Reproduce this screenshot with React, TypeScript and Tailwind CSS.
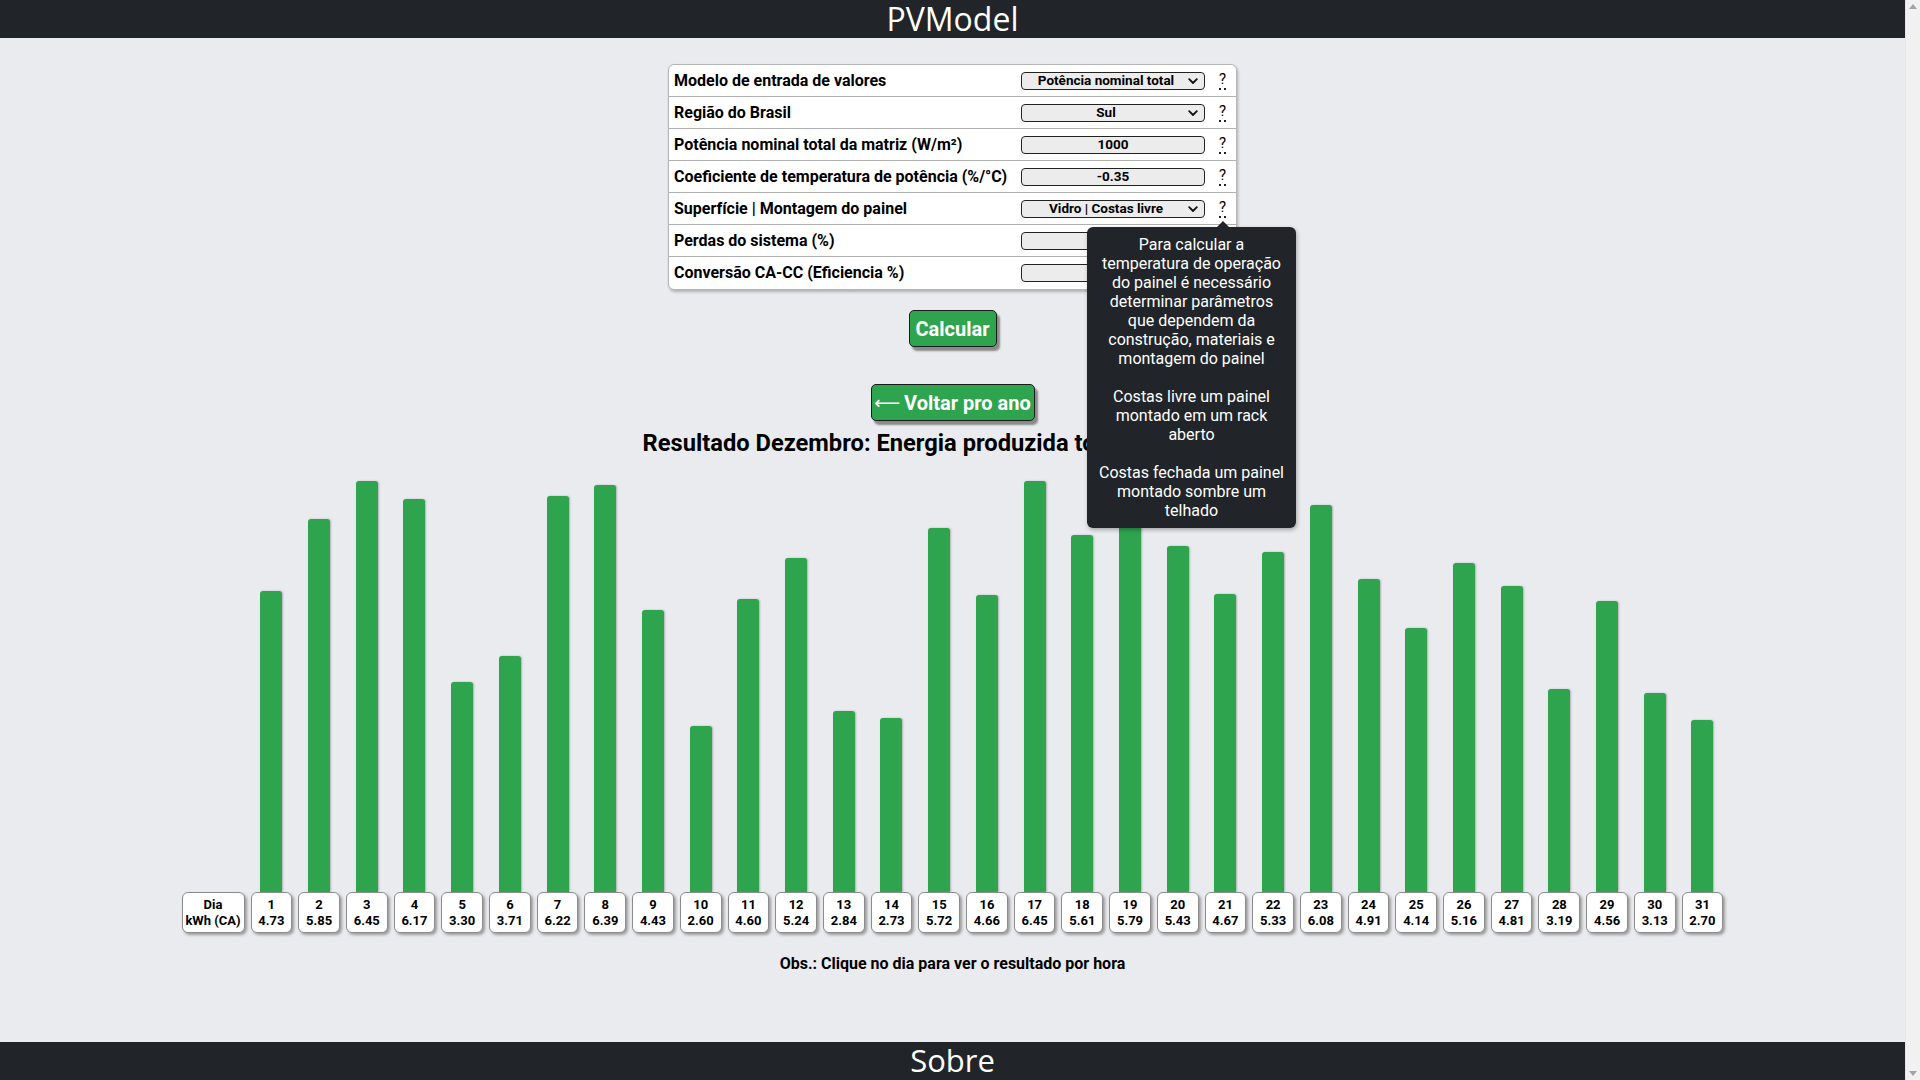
import React from "react";

const rows: { label: string; kind: "select" | "input"; value?: string }[] = [
  { label: "Modelo de entrada de valores", kind: "select", value: "Potência nominal total" },
  { label: "Região do Brasil", kind: "select", value: "Sul" },
  { label: "Potência nominal total da matriz (W/m²)", kind: "input", value: "1000" },
  { label: "Coeficiente de temperatura de potência (%/°C)", kind: "input", value: "-0.35" },
  { label: "Superfície | Montagem do painel", kind: "select", value: "Vidro | Costas livre" },
  { label: "Perdas do sistema (%)", kind: "input", value: "14" },
  { label: "Conversão CA-CC (Eficiencia %)", kind: "input", value: "96" },
];

const values = [
  4.73, 5.85, 6.45, 6.17, 3.3, 3.71, 6.22, 6.39, 4.43, 2.6, 4.6, 5.24, 2.84, 2.73, 5.72, 4.66, 6.45, 5.61,
  5.79, 5.43, 4.67, 5.33, 6.08, 4.91, 4.14, 5.16, 4.81, 3.19, 4.56, 3.13, 2.7,
];

const MAX = 6.45;
const BAR_AREA = 411;

function Chevron() {
  return (
    <svg width="10" height="7" viewBox="0 0 10 7" className="absolute right-[6px] top-[5.5px]">
      <path d="M1.2 1.2 L5 5 L8.8 1.2" fill="none" stroke="#111" strokeWidth="1.8" strokeLinecap="round" strokeLinejoin="round" />
    </svg>
  );
}

function Field({ kind, value }: { kind: string; value?: string }) {
  return (
    <div className="relative w-[184px] h-[18px] rounded-[4px] border border-[#222] bg-[#ececec] flex items-center justify-center text-[13.5px] font-bold text-black leading-none">
      <span className={kind === "select" ? "pr-[14px]" : ""}>{value}</span>
      {kind === "select" && <Chevron />}
    </div>
  );
}

function Scrollbar() {
  return (
    <div className="w-[15px] shrink-0 h-screen bg-[#f1f1f1] border-l border-[#e6e6e6] flex flex-col items-center justify-between py-[4px]">
      <svg width="8" height="5" viewBox="0 0 8 5">
        <path d="M0 5 L4 0 L8 5 Z" fill="#a3a3a3" />
      </svg>
      <svg width="8" height="5" viewBox="0 0 8 5">
        <path d="M0 0 L8 0 L4 5 Z" fill="#a3a3a3" />
      </svg>
    </div>
  );
}

export default function App() {
  return (
    <div className="h-screen overflow-hidden flex bg-[#eaebee] text-black" style={{ fontFamily: "Roboto, 'Liberation Sans', sans-serif" }}>
      <div className="flex-1 min-w-0">
        <header className="h-[38px] bg-[#212529] flex items-center justify-center">
          <span className="text-white text-[32px] leading-[38px]" style={{ fontFamily: "'Open Sans', 'Noto Sans', sans-serif" }}>
            PVModel
          </span>
        </header>

        <main className="flex flex-col items-center pt-[26px]">
          <div className="relative w-[569px] bg-white border border-[#b5b5b5] rounded-[6px] shadow-[1px_2px_3px_rgba(0,0,0,0.25)]">
            {rows.map((r, i) => (
              <div
                key={i}
                className={`h-[32px] flex items-center pl-[5px] ${i < rows.length - 1 ? "border-b border-[#b0b0b0]" : ""}`}
              >
                <div className="flex-1 text-[16px] font-bold leading-none">{r.label}</div>
                <Field kind={r.kind} value={r.value} />
                <div className="w-[31px] flex justify-center pl-[4px]">
                  <span className="text-[15px] leading-[15px] border-b-2 border-dotted border-[#222] pb-[1px]">?</span>
                </div>
              </div>
            ))}

            {/* tooltip */}
            <div className="absolute left-[418px] top-[162px] w-[209px] z-10">
              <div className="absolute left-[130px] -top-[6px] w-0 h-0 border-l-[6px] border-r-[6px] border-b-[6px] border-l-transparent border-r-transparent border-b-[#212529]" />
              <div className="bg-[#212529] text-white rounded-[6px] py-[8px] text-center text-[16px] leading-[19px] shadow-[1px_2px_4px_rgba(0,0,0,0.3)] whitespace-nowrap">
                <div>Para calcular a</div>
                <div>temperatura de operação</div>
                <div>do painel é necessário</div>
                <div>determinar parâmetros</div>
                <div>que dependem da</div>
                <div>construção, materiais e</div>
                <div>montagem do painel</div>
                <div className="h-[19px]" />
                <div>Costas livre um painel</div>
                <div>montado em um rack</div>
                <div>aberto</div>
                <div className="h-[19px]" />
                <div>Costas fechada um painel</div>
                <div>montado sombre um</div>
                <div>telhado</div>
              </div>
            </div>
          </div>

          <button className="mt-[20px] h-[37px] w-[88px] rounded-[5px] border border-[#1b1b1b] bg-[#2ea44f] text-white text-[20px] font-bold shadow-[3px_4px_2px_#8a8a8a]">
            Calcular
          </button>

          <button className="mt-[37px] h-[37px] w-[164px] rounded-[5px] border border-[#1b1b1b] bg-[#2ea44f] text-white text-[20px] font-bold shadow-[3px_4px_2px_#8a8a8a] flex items-center justify-center gap-[4px]">
            <span style={{ fontFamily: "'DejaVu Sans', sans-serif" }} className="font-normal text-[18px]">⟵</span>
            <span>Voltar pro ano</span>
          </button>

          <h2 className="mt-[8px] text-[23.7px] font-bold leading-[28px]">
            Resultado Dezembro: Energia produzida total: 147.60 kWh
          </h2>

          <div className="mt-[24px] w-[1542px] flex gap-[6px] items-end">
            <div className="w-[63px] shrink-0 flex flex-col">
              <div className="h-[41px] rounded-[6px] border border-[#8c8c8c] bg-white shadow-[2px_2px_3px_#9a9a9a] flex flex-col items-center justify-center text-[13px] font-bold leading-[15.5px]">
                <span>Dia</span>
                <span>kWh (CA)</span>
              </div>
            </div>
            {values.map((v, i) => (
              <div key={i} className="flex-1 flex flex-col items-center">
                <div className="h-[411px] w-full flex items-end justify-center">
                  <div
                    className="w-[22px] bg-[#2ea44f] rounded-t-[3px] shadow-[1px_0_2px_rgba(0,0,0,0.25)]"
                    style={{ height: `${(v / MAX) * BAR_AREA}px` }}
                  />
                </div>
                <div className="w-full h-[41px] rounded-[6px] border border-[#8c8c8c] bg-white shadow-[2px_2px_3px_#9a9a9a] flex flex-col items-center justify-center text-[13px] font-bold leading-[15.5px]">
                  <span>{i + 1}</span>
                  <span>{v.toFixed(2)}</span>
                </div>
              </div>
            ))}
          </div>

          <p className="mt-[21px] text-[16px] font-bold leading-[20px]">Obs.: Clique no dia para ver o resultado por hora</p>
        </main>

        <footer className="mt-[68px] h-[90px] bg-[#212529] flex justify-center">
          <span className="text-white text-[31px] leading-[36px]" style={{ fontFamily: "'Open Sans', 'Noto Sans', sans-serif" }}>
            Sobre
          </span>
        </footer>
      </div>
      <Scrollbar />
    </div>
  );
}
